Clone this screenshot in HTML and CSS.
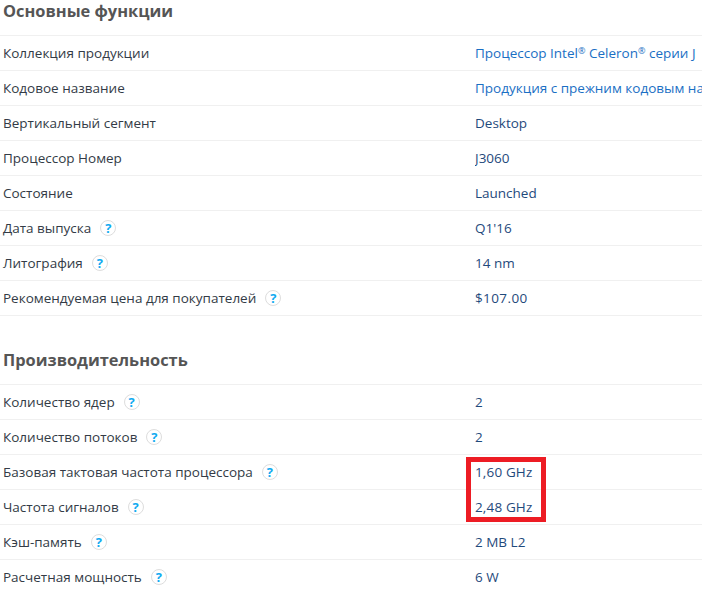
FILE: index.html
```html
<!DOCTYPE html>
<html lang="ru">
<head>
<meta charset="utf-8">
<title>Спецификации</title>
<link rel="stylesheet" href="styles.css">
</head>
<body>
<main class="page">
  <section class="group">
    <h2 class="group-title first">Основные функции</h2>
    <div class="row"><div class="label">Коллекция продукции</div><div class="value"><a class="link" href="#">Процессор Intel<sup class="reg">®</sup> Celeron<sup class="reg">®</sup> серии J</a></div></div>
    <div class="row"><div class="label">Кодовое название</div><div class="value"><a class="link" href="#">Продукция с прежним кодовым названием Braswell</a></div></div>
    <div class="row"><div class="label">Вертикальный сегмент</div><div class="value">Desktop</div></div>
    <div class="row"><div class="label">Процессор Номер</div><div class="value">J3060</div></div>
    <div class="row"><div class="label">Состояние</div><div class="value">Launched</div></div>
    <div class="row"><div class="label">Дата выпуска<span class="help">?</span></div><div class="value">Q1'16</div></div>
    <div class="row"><div class="label">Литография<span class="help">?</span></div><div class="value">14 nm</div></div>
    <div class="row"><div class="label">Рекомендуемая цена для покупателей<span class="help">?</span></div><div class="value num-wide">$107.00</div></div>
  </section>
  <section class="group">
    <h2 class="group-title">Производительность</h2>
    <div class="row"><div class="label">Количество ядер<span class="help">?</span></div><div class="value">2</div></div>
    <div class="row"><div class="label">Количество потоков<span class="help">?</span></div><div class="value">2</div></div>
    <div class="row"><div class="label">Базовая тактовая частота процессора<span class="help">?</span></div><div class="value num">1,60 GHz</div></div>
    <div class="row"><div class="label">Частота сигналов<span class="help">?</span></div><div class="value num">2,48 GHz</div></div>
    <div class="row"><div class="label">Кэш-память<span class="help">?</span></div><div class="value">2 MB L2</div></div>
    <div class="row"><div class="label">Расчетная мощность<span class="help">?</span></div><div class="value">6 W</div></div>
  </section>
  <div class="highlight"></div>
</main>
</body>
</html>
```
FILE: styles.css
```css
html, body {
  margin: 0;
  padding: 0;
  background: #fff;
  overflow: hidden;
}
.page {
  position: relative;
  width: 702px;
  height: 594px;
  overflow: hidden;
  font-family: "Open Sans", "Noto Sans", sans-serif;
  font-size: 13.5px;
  color: #2d3a4a;
}
.group {
  display: flex;
  flex-direction: column;
}
.group-title {
  margin: 0;
  padding: 33px 0 0 3px;
  height: 69px;
  box-sizing: border-box;
  line-height: 22px;
  font-size: 16.4px;
  font-weight: 700;
  color: #555;
  border-bottom: 1px solid #f0f0f0;
}
.group-title.first {
  height: 36px;
  padding-top: 0;
}
.row {
  display: grid;
  grid-template-columns: 475px 1fr;
  height: 35px;
  box-sizing: border-box;
  align-items: center;
  border-bottom: 1px solid #f0f0f0;
  white-space: nowrap;
}
.label {
  padding-left: 3px;
  display: flex;
  align-items: center;
  color: #333b46;
}
.value {
  overflow: hidden;
  color: #1f4a7c;
}
.num {
  letter-spacing: 0.15px;
}
.num-wide {
  letter-spacing: 0.4px;
}
.link {
  color: #1a6fc4;
  text-decoration: none;
}
.reg {
  font-size: 9px;
  line-height: 0;
  vertical-align: 4px;
}
.help {
  display: inline-flex;
  align-items: center;
  justify-content: center;
  width: 14px;
  height: 14px;
  margin-left: 9px;
  border: 1px solid #ddd;
  border-radius: 50%;
  font-size: 13px;
  font-weight: 700;
  line-height: 1;
  color: #10aaf0;
}
.highlight {
  position: absolute;
  left: 466px;
  top: 457px;
  width: 70px;
  height: 55px;
  border: 5px solid #ed1c24;
}
```
